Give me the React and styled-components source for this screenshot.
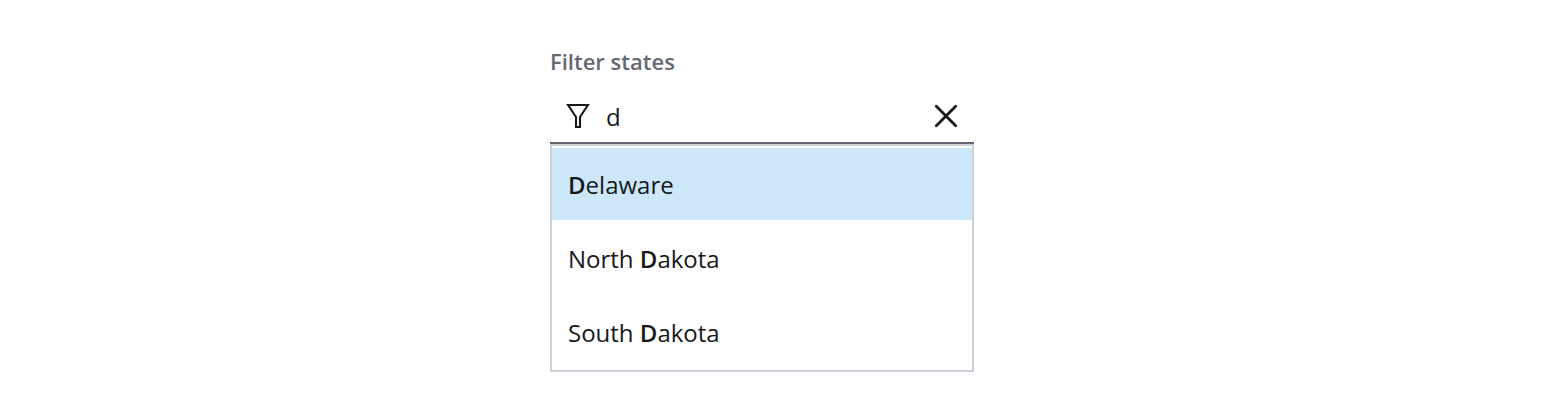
import React from "react";
import styled, { createGlobalStyle } from "styled-components";

const GlobalStyle = createGlobalStyle`
  * { box-sizing: border-box; }
  body {
    margin: 0;
    background: #ffffff;
    color: #16191a;
    font-family: "Open Sans", "Noto Sans", sans-serif;
  }
`;

const Page = styled.main`
  min-height: 418px;
  padding: 45px 0 0 550px;
`;

const Field = styled.div`
  width: 424px;
`;

const Label = styled.label`
  display: block;
  height: 45px;
  font-size: 22px;
  font-weight: 600;
  line-height: 32px;
  color: #636872;
`;

const InputBar = styled.div`
  display: flex;
  align-items: center;
  height: 54px;
  padding: 0 14px 0 16px;
  border-bottom: 2px solid #616671;
`;

const Query = styled.span`
  flex: 1;
  margin-left: 16px;
  padding-top: 2px;
  font-size: 24px;
  line-height: 36px;
`;

const ClearButton = styled.button`
  display: flex;
  padding: 0;
  border: 0;
  background: none;
  color: inherit;
`;

const Menu = styled.ul`
  display: flex;
  flex-direction: column;
  gap: 2px;
  height: 228px;
  margin: 0;
  padding: 2px 0 0;
  list-style: none;
  border: 2px solid #cdd1d9;
`;

const Option = styled.li`
  height: 72px;
  padding: 0 16px;
  font-size: 24px;
  line-height: 74px;
  background: ${({ $active }) => ($active ? "#cce7fa" : "transparent")};
`;

const Match = styled.b`
  font-weight: 600;
`;

const FilterIcon = () => (
  <svg width="24" height="26" viewBox="0 0 24 26" fill="none" stroke="currentColor" strokeWidth="2.1">
    <path d="M2.1 2H21.9L14 14V24H10V14Z" />
  </svg>
);

const CloseIcon = () => (
  <svg width="28" height="28" viewBox="0 0 28 28" fill="none" stroke="currentColor" strokeWidth="2.8" strokeLinecap="round">
    <path d="M4.3 4.3L23.7 23.7M23.7 4.3L4.3 23.7" />
  </svg>
);

export default function App() {
  return (
    <Page>
      <GlobalStyle />
      <Field>
        <Label>Filter states</Label>
        <InputBar>
          <FilterIcon />
          <Query>d</Query>
          <ClearButton aria-label="Clear"><CloseIcon /></ClearButton>
        </InputBar>
        <Menu>
          <Option $active><Match>D</Match>elaware</Option>
          <Option>North <Match>D</Match>akota</Option>
          <Option>South <Match>D</Match>akota</Option>
        </Menu>
      </Field>
    </Page>
  );
}
